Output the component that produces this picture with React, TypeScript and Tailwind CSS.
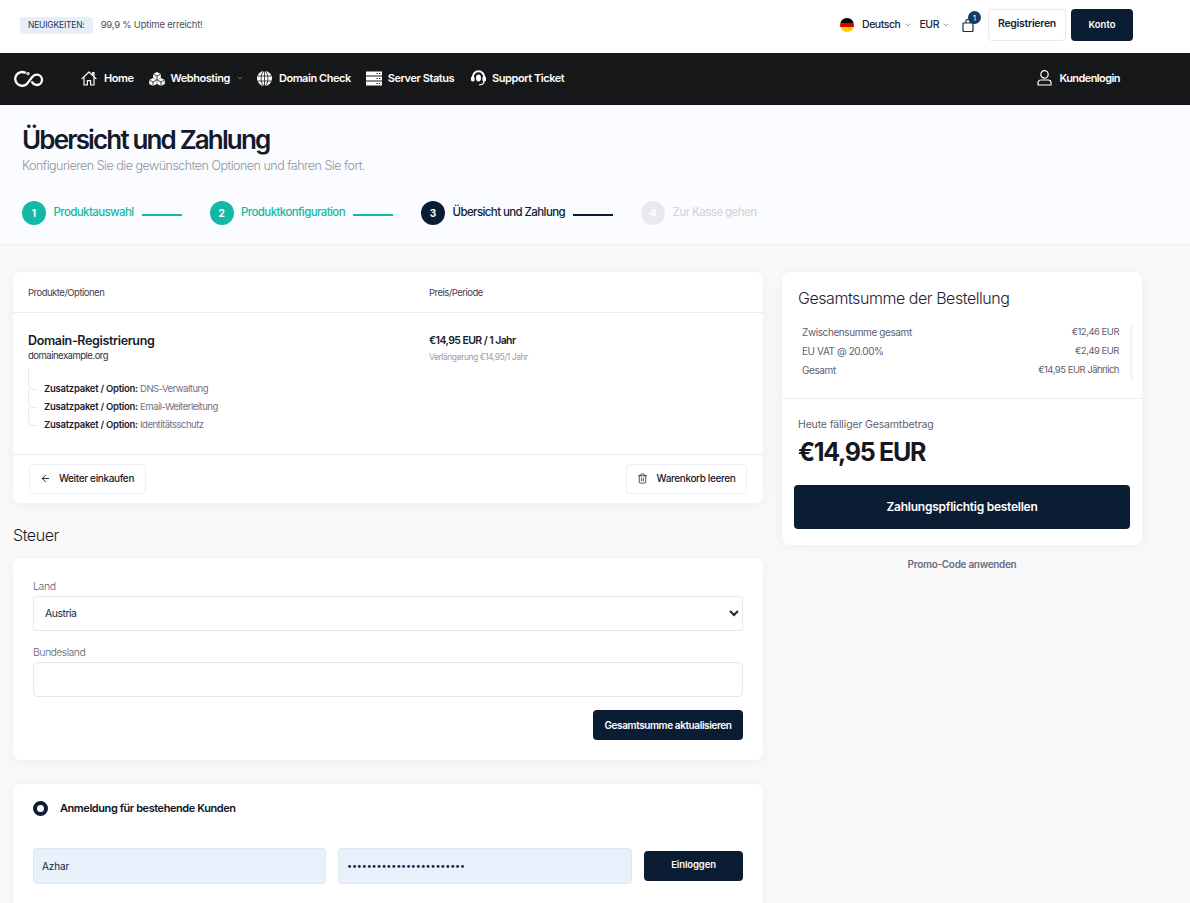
import { ChevronDown, ArrowLeft, Trash2 } from "lucide-react";
import type { ReactNode } from "react";

function Logo() {
  return (
    <svg width="31" height="18" viewBox="0 0 31 18" fill="none" stroke="white" strokeWidth="2.3" strokeLinecap="round" className="mt-[2px]">
      <path d="M11 2.6A6.9 6.9 0 1 0 13.2 13.6L18 7.2c1.4-1.8 3-2.6 4.7-2.6a5.2 5.2 0 0 1 .2 10.4c-2 .1-3.6-1-4.8-2.8" />
      <circle cx="14" cy="3.6" r="0.5" fill="white" />
    </svg>
  );
}

function HomeIcon() {
  return (
    <svg width="16" height="15" viewBox="0 0 16 15" fill="none" stroke="white" strokeWidth="1.2" strokeLinejoin="round" strokeLinecap="round">
      <path d="M1 7.6 8 1l7 6.6" />
      <path d="M3 6v8h3.4v-4.4h3.2V14H13V6" />
      <path d="M11.6 3.2V1.6h1.4v3" />
    </svg>
  );
}

function BoxesIcon() {
  const cube = "l3.8-2 3.8 2v4l-3.8 2-3.8-2z";
  return (
    <svg width="16" height="15" viewBox="0 0 16 15">
      <path d={`M4.2 3${cube}`} fill="white" />
      <path d={`M.2 9${cube}`} fill="white" />
      <path d={`M8.2 9${cube}`} fill="white" />
      <g fill="none" stroke="#17181a" strokeWidth="0.8">
        <path d="M4.2 3 8 5l3.8-2M8 5v4" />
        <path d="M.2 9 4 11l3.8-2M4 11v4" />
        <path d="M8.2 9 12 11l3.8-2M12 11v4" />
      </g>
    </svg>
  );
}

function GlobeIcon() {
  return (
    <svg width="15" height="15" viewBox="0 0 15 15">
      <circle cx="7.5" cy="7.5" r="7.5" fill="white" />
      <g fill="none" stroke="#17181a" strokeWidth="0.8">
        <ellipse cx="7.5" cy="7.5" rx="3.4" ry="7.5" />
        <path d="M7.5 0v15M.6 5h13.8M.6 10h13.8" />
      </g>
    </svg>
  );
}

function ServerIcon() {
  return (
    <svg width="16" height="15" viewBox="0 0 16 15" fill="white">
      <rect x="0" y="0.5" width="16" height="4" />
      <rect x="0" y="5.5" width="16" height="4" />
      <rect x="0" y="10.5" width="16" height="4" />
      <g fill="#17181a">
        <rect x="10.5" y="2" width="1.2" height="1" />
        <rect x="13" y="2" width="1.2" height="1" />
        <rect x="10.5" y="7" width="1.2" height="1" />
        <rect x="13" y="7" width="1.2" height="1" />
        <rect x="10.5" y="12" width="1.2" height="1" />
        <rect x="13" y="12" width="1.2" height="1" />
      </g>
    </svg>
  );
}

function HeadsetIcon() {
  return (
    <svg width="15" height="16" viewBox="0 0 15 16" fill="none">
      <path d="M1.8 8V7A5.7 5.7 0 0 1 13.2 7v1" stroke="white" strokeWidth="2" />
      <rect x="0" y="6.5" width="3.6" height="5" rx="1.4" fill="white" />
      <rect x="11.4" y="6.5" width="3.6" height="5" rx="1.4" fill="white" />
      <ellipse cx="7.5" cy="8" rx="2.5" ry="3.4" fill="white" />
      <path d="M13 11c0 3-2 3.8-4.5 3.8" stroke="white" strokeWidth="1.2" strokeLinecap="round" />
    </svg>
  );
}

function UserIcon() {
  return (
    <svg width="15" height="16" viewBox="0 0 15 16" fill="none" stroke="white" strokeWidth="1.2">
      <circle cx="7.5" cy="4.4" r="3.7" />
      <path d="M1 15v-2.2A2.8 2.8 0 0 1 3.8 10h7.4a2.8 2.8 0 0 1 2.8 2.8V15z" strokeLinejoin="round" />
    </svg>
  );
}

function BagIcon() {
  return (
    <svg width="12" height="13" viewBox="0 0 12 13" fill="none" stroke="#1a2f4d" strokeWidth="1.2" strokeLinejoin="round">
      <path d="M1 4h10v7.5a1 1 0 0 1-1 1H2a1 1 0 0 1-1-1z" />
      <path d="M3.8 4V2.6a2.2 2.2 0 0 1 4.4 0V4" />
    </svg>
  );
}

function Flag() {
  return (
    <span className="flex h-[14px] w-[14px] flex-col overflow-hidden rounded-full">
      <span className="h-1/3 bg-black" />
      <span className="h-1/3 bg-[#dd0000]" />
      <span className="h-1/3 bg-[#ffce00]" />
    </span>
  );
}

function NavItem({ icon, label, caret, className }: { icon: ReactNode; label: string; caret?: boolean; className: string }) {
  return (
    <div className={`flex items-center ${className}`}>
      {icon}
      <span className="text-[11px] font-semibold tracking-[-0.45px] text-white">{label}</span>
      {caret && <ChevronDown size={8} className="-mr-[2px] text-gray-400" />}
    </div>
  );
}

function Step({ n, label, state, line }: { n: number; label: string; state: "done" | "active" | "todo"; line?: boolean }) {
  const circle = state === "done" ? "bg-[#14b8a6]" : state === "active" ? "bg-[#0b1d33]" : "bg-[#e8e9ec]";
  const text = state === "done" ? "text-[#14b8a6]" : state === "active" ? "text-[#0b1d33]" : "text-[#d5d6da]";
  const bar = state === "done" ? "bg-[#14b8a6]" : "bg-[#0b1d33]";
  return (
    <div className="flex items-center">
      <span className={`flex h-6 w-6 items-center justify-center rounded-full text-[10px] font-bold text-white ${circle}`}>{n}</span>
      <span className={`ml-[7.5px] text-[11.5px] font-medium tracking-[-0.6px] ${text}`}>{label}</span>
      {line && <span className={`ml-[8px] mt-[3px] h-[2px] w-[40px] ${bar}`} />}
    </div>
  );
}

function Option({ name }: { name: string }) {
  return (
    <div className="relative h-[18px] pl-[16px] text-[9.5px] leading-[18px] tracking-[-0.25px]">
      <span className="absolute -top-[8px] left-0 h-[18px] w-[9px] rounded-bl-[6px] border-b border-l border-[#e8e9f0]" />
      <span className="font-semibold text-[#1a1d2b]">Zusatzpaket / Option: </span>
      <span className="tracking-[-0.5px] text-[#6f7187]">{name}</span>
    </div>
  );
}

function TotalRow({ a, b }: { a: string; b: string }) {
  return (
    <div className="flex h-[19px] items-center justify-between text-[#5e6070]">
      <span className="text-[10px] tracking-[-0.4px]">{a}</span>
      <span className="text-[9.5px] tracking-[-0.5px]">{b}</span>
    </div>
  );
}

const card = "rounded-[8px] bg-white shadow-[0_2px_14px_rgba(20,20,40,0.05)]";

export default function App() {
  return (
    <div className="h-[903px] overflow-hidden bg-[#f9f9fa] font-['Inter',sans-serif] text-[#0b1d33]">
      <header className="flex h-[53px] items-center justify-between bg-white pb-[3px] pl-[20px] pr-[57px]">
        <div className="flex items-center gap-[8px]">
          <span className="flex h-[17px] items-center rounded-[3px] bg-[#e7eef9] px-[8px] text-[8.5px] tracking-[-0.2px] text-[#1f3554]">NEUIGKEITEN:</span>
          <span className="text-[9.5px] tracking-[-0.22px] text-[#4d4f5c]">99,9 % Uptime erreicht!</span>
        </div>
        <div className="flex items-center">
          <Flag />
          <span className="ml-[8px] text-[10.5px] font-medium tracking-[-0.45px] text-[#1a2438]">Deutsch</span>
          <ChevronDown size={8} className="ml-[4px] text-gray-500" />
          <span className="ml-[7px] text-[10.5px] font-medium tracking-[-0.45px] text-[#1a2438]">EUR</span>
          <ChevronDown size={8} className="ml-[3px] text-gray-500" />
          <div className="relative ml-[12px] mr-[14px] mt-[1px]">
            <BagIcon />
            <span className="absolute -right-[7px] -top-[8px] flex h-[13px] w-[13px] items-center justify-center rounded-full bg-[#173a63] text-[8px] text-white">1</span>
          </div>
          <button className="h-[32px] w-[78px] rounded-[4px] border border-[#e9e9ee] bg-white pb-[2px] text-[10.5px] font-semibold tracking-[-0.3px] text-[#1a2438]">Registrieren</button>
          <button className="ml-[5px] h-[32px] w-[62px] rounded-[4px] bg-[#0b1d33] text-[9.5px] font-semibold text-white">Konto</button>
        </div>
      </header>

      <nav className="flex h-[52px] items-center justify-between bg-[#17181a] pb-[2px] pl-[14px] pr-[70px]">
        <div className="flex items-center">
          <Logo />
          <div className="ml-[36px] flex items-center gap-[15px]">
            <NavItem className="gap-[7px]" icon={<HomeIcon />} label="Home" />
            <NavItem className="gap-[6px]" icon={<BoxesIcon />} label="Webhosting" caret />
            <NavItem className="gap-[7px]" icon={<GlobeIcon />} label="Domain Check" />
            <NavItem className="gap-[6px]" icon={<ServerIcon />} label="Server Status" />
            <NavItem className="ml-[2px] gap-[6px]" icon={<HeadsetIcon />} label="Support Ticket" />
          </div>
        </div>
        <div className="flex items-center gap-[7px]">
          <UserIcon />
          <span className="text-[11px] font-semibold tracking-[-0.58px] text-white">Kundenlogin</span>
        </div>
      </nav>

      <section className="h-[140px] border-b border-[#f0f0f2] bg-[#fbfcff] pl-[22px] pt-[19px]">
        <h1 className="text-[26px] font-semibold leading-[31px] tracking-[-1.85px] text-[#131a2b]">Übersicht und Zahlung</h1>
        <p className="mt-[3px] text-[12.5px] font-light leading-[16px] tracking-[-0.5px] text-[#8f93a0]">Konfigurieren Sie die gewünschten Optionen und fahren Sie fort.</p>
        <div className="mt-[27px] flex items-center gap-[28px]">
          <Step n={1} label="Produktauswahl" state="done" line />
          <Step n={2} label="Produktkonfiguration" state="done" line />
          <Step n={3} label="Übersicht und Zahlung" state="active" line />
          <Step n={4} label="Zur Kasse gehen" state="todo" />
        </div>
      </section>

      <main className="flex items-start gap-[19px] pl-[13px] pt-[27px]">
        <div className="w-[750px] shrink-0">
          <div className={card}>
            <div className="flex h-[41px] items-center border-b border-[#ebebf3] pl-[15px] pt-[2px] text-[9.5px] tracking-[-0.5px] text-[#3f4252]">
              <span className="w-[401px]">Produkte/Optionen</span>
              <span>Preis/Periode</span>
            </div>
            <div className="flex h-[142px] border-b border-[#ebebf8] pl-[15px] pt-[19px]">
              <div className="w-[401px]">
                <div className="text-[12.5px] font-semibold leading-[17px] tracking-[-0.35px] text-[#171b2b]">Domain-Registrierung</div>
                <div className="text-[9.5px] leading-[13px] tracking-[-0.5px] text-[#2e3142]">domainexample.org</div>
                <div className="relative mt-[6px] pt-[12px]">
                  <span className="absolute left-0 top-0 h-[5px] w-px bg-[#e8e9f0]" />
                  <Option name="DNS-Verwaltung" />
                  <Option name="Email-Weiterleitung" />
                  <Option name="Identitätsschutz" />
                </div>
              </div>
              <div>
                <div className="text-[10.5px] font-semibold leading-[17px] tracking-[-0.57px] text-[#171b2b]">€14,95 EUR / 1 Jahr</div>
                <div className="mt-[2px] text-[8.5px] leading-[13px] tracking-[-0.45px] text-[#9a9dab]">Verlängerung €14,95/1 Jahr</div>
              </div>
            </div>
            <div className="flex h-[48px] items-center justify-between pl-[16px] pr-[16px]">
              <button className="flex h-[30px] w-[117px] items-center justify-center gap-[8px] rounded-[4px] border border-[#ededf8] pb-[1px] pr-[1px] text-[10px] font-medium tracking-[-0.35px] text-[#171b2b]">
                <ArrowLeft size={11} />
                Weiter einkaufen
              </button>
              <button className="flex h-[30px] w-[121px] items-center justify-center gap-[9px] rounded-[4px] border border-[#ededf8] pb-[1px] pr-[1px] text-[10px] font-medium tracking-[-0.38px] text-[#171b2b]">
                <Trash2 size={11} strokeWidth={1.6} />
                Warenkorb leeren
              </button>
            </div>
          </div>

          <h2 className="mt-[22px] text-[16px] font-light leading-[20px] tracking-[-0.45px] text-[#1a1d2b]">Steuer</h2>

          <div className={`${card} mt-[13px] h-[202px] px-[20px] pt-[22px]`}>
            <label className="block text-[10.5px] font-light leading-[13px] tracking-[-0.4px] text-[#606372]">Land</label>
            <select defaultValue="Austria" className="mt-[3px] h-[35px] w-full rounded-[4px] border border-[#e8e8ee] bg-white pl-[7px] text-[10.5px] tracking-[-0.5px] text-[#1a2438]">
              <option>Austria</option>
            </select>
            <label className="mt-[15px] block text-[10.5px] font-light leading-[13px] tracking-[-0.55px] text-[#606372]">Bundesland</label>
            <input className="mt-[3px] block h-[35px] w-full rounded-[4px] border border-[#e8e8ee] bg-white" />
            <div className="mt-[13px] flex justify-end">
              <button className="h-[30px] w-[150px] rounded-[4px] bg-[#0b1d33] text-[10px] font-semibold tracking-[-0.4px] text-white">Gesamtsumme aktualisieren</button>
            </div>
          </div>

          <div className={`${card} mt-[24px] h-[140px] px-[20px] pt-[16px]`}>
            <div className="flex items-center gap-[12px]">
              <span className="h-[15px] w-[15px] rounded-full border-[4px] border-[#0b1d33] bg-white" />
              <span className="text-[11px] font-semibold tracking-[-0.43px] text-[#10131f]">Anmeldung für bestehende Kunden</span>
            </div>
            <div className="mt-[31px] flex items-center">
              <input readOnly value="Azhar" className="h-[36px] w-[293px] rounded-[4px] border border-[#e1e6f0] bg-[#e8f0fb] px-[8px] text-[10px] tracking-[-0.1px] text-[#1a2438]" />
              <input readOnly type="password" value="aaaaaaaaaaaaaaaaaaaaaaaa" className="ml-[12px] h-[36px] w-[294px] rounded-[4px] border border-[#e1e6f0] bg-[#e8f0fb] px-[8px] text-[9px] tracking-[-0.15px] text-[#1a2438]" />
              <button className="ml-[12px] h-[30px] w-[99px] rounded-[4px] bg-[#0b1d33] text-[9.5px] font-semibold tracking-[-0.1px] text-white">Einloggen</button>
            </div>
          </div>
        </div>

        <aside className="w-[360px] shrink-0">
          <div className={`${card} h-[273px]`}>
            <h3 className="pl-[16px] pt-[15px] text-[16px] font-light leading-[22px] tracking-[-0.45px] text-[#1f2230]">Gesamtsumme der Bestellung</h3>
            <div className="mx-[9px] mt-[12px] flex h-[61px] gap-[11px] pl-[11px]">
              <div className="flex-1 pt-[2px]">
                <TotalRow a="Zwischensumme gesamt" b="€12,46 EUR" />
                <TotalRow a="EU VAT @ 20.00%" b="€2,49 EUR" />
                <TotalRow a="Gesamt" b="€14,95 EUR Jährlich" />
              </div>
              <span className="mt-[4px] h-[57px] w-[3px] bg-[#f6f6f8]" />
            </div>
            <div className="mt-[16px] border-t border-[#ececf6] pl-[16px] pt-[19px]">
              <div className="text-[10.5px] leading-[14px] tracking-[-0.15px] text-[#5e6070]">Heute fälliger Gesamtbetrag</div>
              <div className="mt-[4px] text-[25px] font-bold leading-[32px] tracking-[-1.3px] text-[#16181f]">€14,95 EUR</div>
            </div>
            <div className="mt-[17px] px-[12px]">
              <button className="h-[44px] w-full rounded-[4px] bg-[#0b1d33] text-[12px] font-semibold tracking-[-0.25px] text-white">Zahlungspflichtig bestellen</button>
            </div>
          </div>
          <div className="mt-[12px] text-center text-[10px] font-semibold tracking-[-0.3px] text-[#6a6d7e]">Promo-Code anwenden</div>
        </aside>
      </main>
    </div>
  );
}
